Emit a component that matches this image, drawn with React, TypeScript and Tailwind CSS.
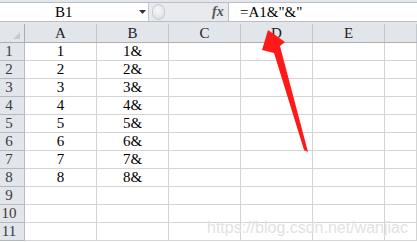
import React from 'react'

const cols = ['A', 'B', 'C', 'D', 'E', '']
const rows = Array.from({ length: 11 }, (_, i) => i + 1)

function FormulaBar() {
  return (
    <div className="h-[24px] bg-[#e3e6ea] pt-[2px] flex flex-col">
      <div className="flex h-[20px] border-y border-[#b9bec6]">
        {/* name box */}
        <div className="w-[148px] bg-white relative">
          <span className="absolute left-[55px] top-[1px] text-[15px] leading-[16px] text-black">B1</span>
          <svg className="absolute left-[139px] top-[7px]" width="7" height="4" viewBox="0 0 7 4">
            <path d="M0 0h7L3.5 4z" fill="#333" />
          </svg>
        </div>
        {/* splitter */}
        <div className="w-[80px] bg-[#e8eaed] border-l border-[#c2c6cc] relative flex items-center">
          <div className="ml-[3px] w-[13px] h-[16px] rounded-full border border-[#c7cbd0] bg-[radial-gradient(circle_at_45%_40%,#f7f8f9,#d6d9dd)]" />
          <span className="absolute left-[63px] top-[1px] text-[14px] leading-[16px] italic font-bold text-[#555]">
            fx
          </span>
        </div>
        {/* formula */}
        <div className="flex-1 bg-white border-l border-[#b9bec6] relative">
          <span className="absolute left-[11px] top-[1px] text-[15px] leading-[16px] text-black">=A1&amp;"&amp;"</span>
        </div>
      </div>
    </div>
  )
}

function HeaderRow() {
  return (
    <div className="flex h-[19px] bg-[#e2e5ea] border-b border-[#a9b0b9]">
      <div className="w-[25px] shrink-0 border-r border-[#a9b0b9] relative">
        <svg className="absolute right-[4px] bottom-[3px]" width="7" height="7" viewBox="0 0 7 7">
          <path d="M7 0v7H0z" fill="#c8ccd2" />
        </svg>
      </div>
      {cols.map((c, i) => (
        <div
          key={i}
          className={`${c ? 'w-[72px]' : 'flex-1'} shrink-0 border-r border-[#c3c8cf] flex items-center justify-center text-[15px] text-[#222]`}
        >
          {c}
        </div>
      ))}
    </div>
  )
}

function DataRow({ n }: { n: number }) {
  const a = n <= 8 ? String(n) : ''
  const b = n <= 8 ? `${n}&` : ''
  return (
    <div className="flex h-[18px]">
      <div className="w-[25px] shrink-0 bg-[#e2e5ea] border-r border-b border-[#b4bac3] flex items-center justify-center pr-[6px] text-[15px] text-[#3a3a3a]">
        {n}
      </div>
      {cols.map((c, i) => (
        <div
          key={i}
          className={`${c ? 'w-[72px]' : 'flex-1'} shrink-0 border-r border-b border-[#d4d4d4] flex items-center justify-center text-[15px] text-black`}
        >
          {i === 0 ? a : i === 1 ? b : ''}
        </div>
      ))}
    </div>
  )
}

export default function App() {
  return (
    <div className="w-[417px] h-[242px] overflow-hidden relative bg-white font-['Liberation_Serif',serif]">
      <FormulaBar />
      <HeaderRow />
      {rows.map((n) => (
        <DataRow key={n} n={n} />
      ))}

      {/* watermark */}
      <span className="absolute left-[207px] top-[219px] text-[16px] leading-[18px] text-[#e2e2e2] pointer-events-none font-['Liberation_Sans',sans-serif]">
        https://blog.csdn.net/wanjiac
      </span>

      {/* red arrow annotation */}
      <svg className="absolute left-0 top-0 pointer-events-none" width="417" height="242" viewBox="0 0 417 242">
        <path d="M268 30 L285 42 L280 46 L308 152 L304 150 L274 53 L262 50 Z" fill="#ff1a1a" />
      </svg>
    </div>
  )
}
